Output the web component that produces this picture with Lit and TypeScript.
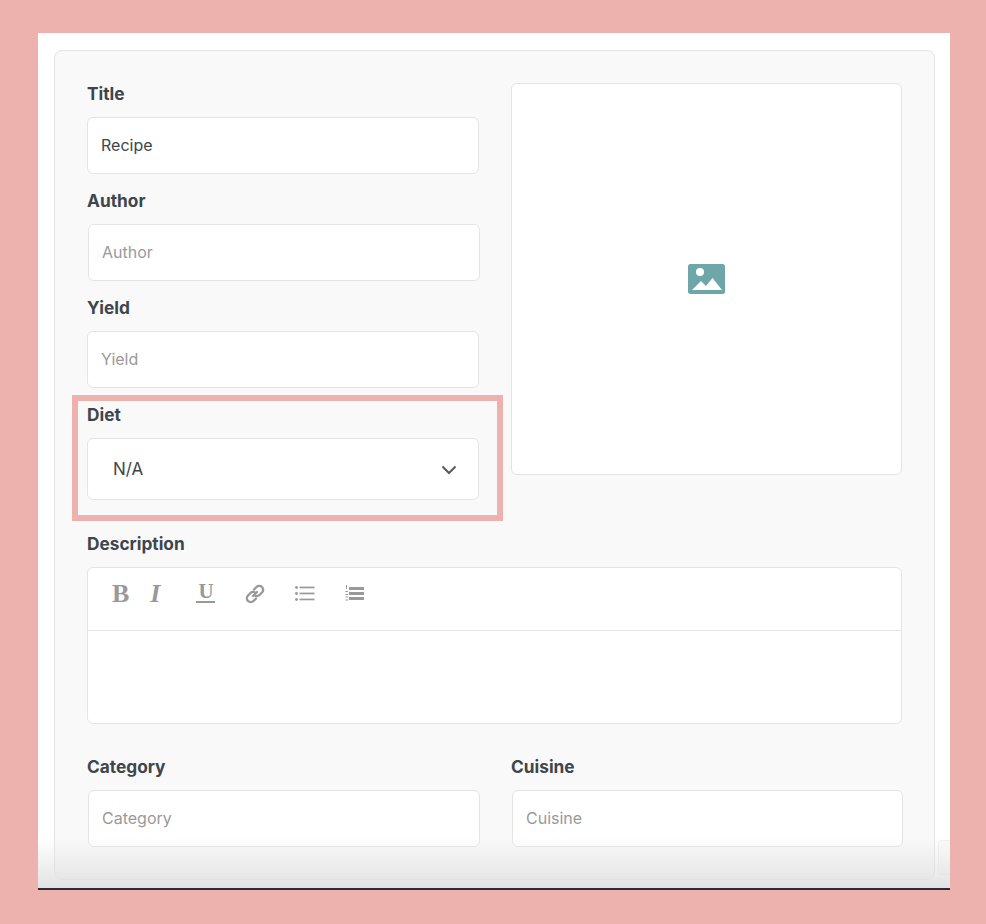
import {LitElement, html, css, svg} from 'lit';
import {customElement} from 'lit/decorators.js';

const imageIcon = svg`<rect width="37" height="30" rx="2.500" fill="#6fa6aa"/><circle cx="12" cy="8" r="4" fill="#fff"/><path d="M4 26 13 17 18 22 24.500 14 34 26Z" fill="#fff"/>`;

const linkIcon = svg`<g fill="none" stroke="#999" stroke-width="2.400" stroke-linecap="round"><path d="M8 12 12 8"/><path d="M9 5.500 11.500 3a3.700 3.700 0 0 1 5.500 5.500L14.500 11a3.700 3.700 0 0 1-4 .8"/><path d="M11 14.500 8.500 17A3.700 3.700 0 0 1 3 11.500L5.500 9a3.700 3.700 0 0 1 4-.8"/></g>`;

const bulletIcon = svg`<g fill="#999"><circle cx="1.500" cy="2.500" r="1.400"/><circle cx="1.500" cy="8.500" r="1.400"/><circle cx="1.500" cy="14.500" r="1.400"/><rect x="4.500" y="1.600" width="15" height="1.700"/><rect x="4.500" y="7.600" width="15" height="1.700"/><rect x="4.500" y="13.600" width="15" height="1.700"/></g>`;

const numberIcon = svg`<g fill="#999"><rect x="4" y="2" width="15" height="3"/><rect x="4" y="7" width="15" height="3"/><rect x="4" y="12" width="15" height="3"/><rect x="1" y="0" width="1" height="4"/><rect x="0.500" y="6" width="2.500" height="1"/><rect x="0.500" y="9" width="2.500" height="1"/><rect x="0.500" y="11.500" width="2.500" height="1"/><rect x="0.500" y="14.500" width="2.500" height="1"/></g>`;

@customElement('app-root')
export class AppRoot extends LitElement {
  static styles = css`
    :host {
      display: block;
      height: 924px;
      box-sizing: border-box;
      padding: 33px 36px 0 38px;
      background: #edb2ad;
      font-family: 'Inter', 'Liberation Sans', sans-serif;
      color: #3e454c;
      position: relative;
      overflow: hidden;
    }

    .frame {
      height: 857px;
      box-sizing: border-box;
      background: #fff;
      padding: 17px 15px 0 16px;
      border-bottom: 2px solid #2b2d3a;
      position: relative;
    }

    .card {
      height: 830px;
      box-sizing: border-box;
      background: #f9f9f9;
      border: 1px solid #e4e4e4;
      border-radius: 8px;
      padding: 32px;
    }

    .top {
      display: grid;
      grid-template-columns: 392px 391px;
      gap: 32px;
    }

    .fields {
      display: flex;
      flex-direction: column;
      gap: 16px;
    }

    label {
      display: block;
      height: 24px;
      line-height: 22px;
      margin-bottom: 10px;
      font-size: 17.3px;
      font-weight: 700;
    }

    .input {
      height: 57px;
      box-sizing: border-box;
      display: flex;
      align-items: center;
      padding: 0 13px 2px;
      background: #fff;
      border: 1px solid #e4e4e4;
      border-radius: 6px;
      font-size: 16px;
      color: #999;
    }

    .input.filled {
      color: #3e454c;
    }

    .nudge {
      margin: 0 -1px 0 1px;
    }

    .select {
      height: 62px;
      justify-content: space-between;
      padding: 0 21px 0 25px;
      font-size: 17px;
      color: #3e454c;
    }

    .select svg {
      width: 16px;
      height: 10px;
      margin-top: 1px;
    }

    .image-box {
      height: 392px;
      box-sizing: border-box;
      display: flex;
      align-items: center;
      justify-content: center;
      background: #fff;
      border: 1px solid #e4e4e4;
      border-radius: 6px;
    }

    .image-box svg {
      width: 37px;
      height: 30px;
    }

    .description {
      margin-top: 33px;
    }

    .editor {
      height: 157px;
      box-sizing: border-box;
      background: #fff;
      border: 1px solid #e4e4e4;
      border-radius: 6px;
    }

    .toolbar {
      height: 63px;
      box-sizing: border-box;
      border-bottom: 1px solid #e4e4e4;
      display: flex;
      align-items: flex-start;
      padding: 13px 0 0 24px;
      color: #999;
      font-family: 'Liberation Serif', serif;
      font-size: 26px;
      font-weight: 700;
      line-height: 26px;
    }

    .toolbar span,
    .toolbar svg {
      display: block;
      flex: none;
    }

    .italic {
      font-style: italic;
      margin-left: 21px;
    }

    .underline {
      width: 19px;
      margin-left: 36px;
      text-align: center;
      font-size: 21px;
      line-height: 19px;
      margin-top: 1px;
      border-bottom: 2px solid #999;
    }

    .link {
      width: 20px;
      height: 20px;
      margin: 3px 0 0 30px;
    }

    .bullets {
      width: 20px;
      height: 17px;
      margin: 4px 0 0 30px;
    }

    .numbers {
      width: 20px;
      height: 17px;
      margin: 4px 0 0 30px;
    }

    .bottom {
      display: grid;
      grid-template-columns: 392px 391px;
      gap: 32px;
      margin-top: 32px;
    }

    .highlight {
      position: absolute;
      left: 34px;
      top: 362px;
      width: 431px;
      height: 126px;
      box-sizing: border-box;
      border: 6px solid #edb2ad;
      pointer-events: none;
    }

    .fade {
      position: absolute;
      left: 0;
      right: 0;
      bottom: 0;
      height: 50px;
      background: linear-gradient(rgba(224, 224, 224, 0), rgba(224, 224, 224, 0.9));
      pointer-events: none;
    }

    .edge {
      position: absolute;
      right: 0;
      bottom: 13px;
      width: 12px;
      height: 35px;
      box-sizing: border-box;
      border: 1px solid #f0f0f0;
      border-right: 0;
      border-radius: 4px 0 0 4px;
      background: #fafafa;
    }
  `;

  render() {
    return html`
      <div class="frame">
        <div class="card">
          <div class="top">
            <div class="fields">
              <div>
                <label>Title</label>
                <div class="input filled">Recipe</div>
              </div>
              <div>
                <label>Author</label>
                <div class="input nudge">Author</div>
              </div>
              <div>
                <label>Yield</label>
                <div class="input">Yield</div>
              </div>
              <div>
                <label>Diet</label>
                <div class="input select">
                  N/A
                  <svg viewBox="0 0 16 10">
                    <path d="M1.500 1.500 8 8l6.500-6.500" fill="none" stroke="#555a60" stroke-width="2"/>
                  </svg>
                </div>
              </div>
            </div>
            <div class="image-box">
              <svg viewBox="0 0 37 30">${imageIcon}</svg>
            </div>
          </div>

          <div class="description">
            <label>Description</label>
            <div class="editor">
              <div class="toolbar">
                <span>B</span>
                <span class="italic">I</span>
                <span class="underline">U</span>
                <svg class="link" viewBox="0 0 20 20">${linkIcon}</svg>
                <svg class="bullets" viewBox="0 0 20 17">${bulletIcon}</svg>
                <svg class="numbers" viewBox="0 0 20 17">${numberIcon}</svg>
              </div>
            </div>
          </div>

          <div class="bottom">
            <div>
              <label>Category</label>
              <div class="input nudge">Category</div>
            </div>
            <div>
              <label>Cuisine</label>
              <div class="input nudge">Cuisine</div>
            </div>
          </div>
        </div>
        <div class="edge"></div>
        <div class="fade"></div>
        <div class="highlight"></div>
      </div>
    `;
  }
}
